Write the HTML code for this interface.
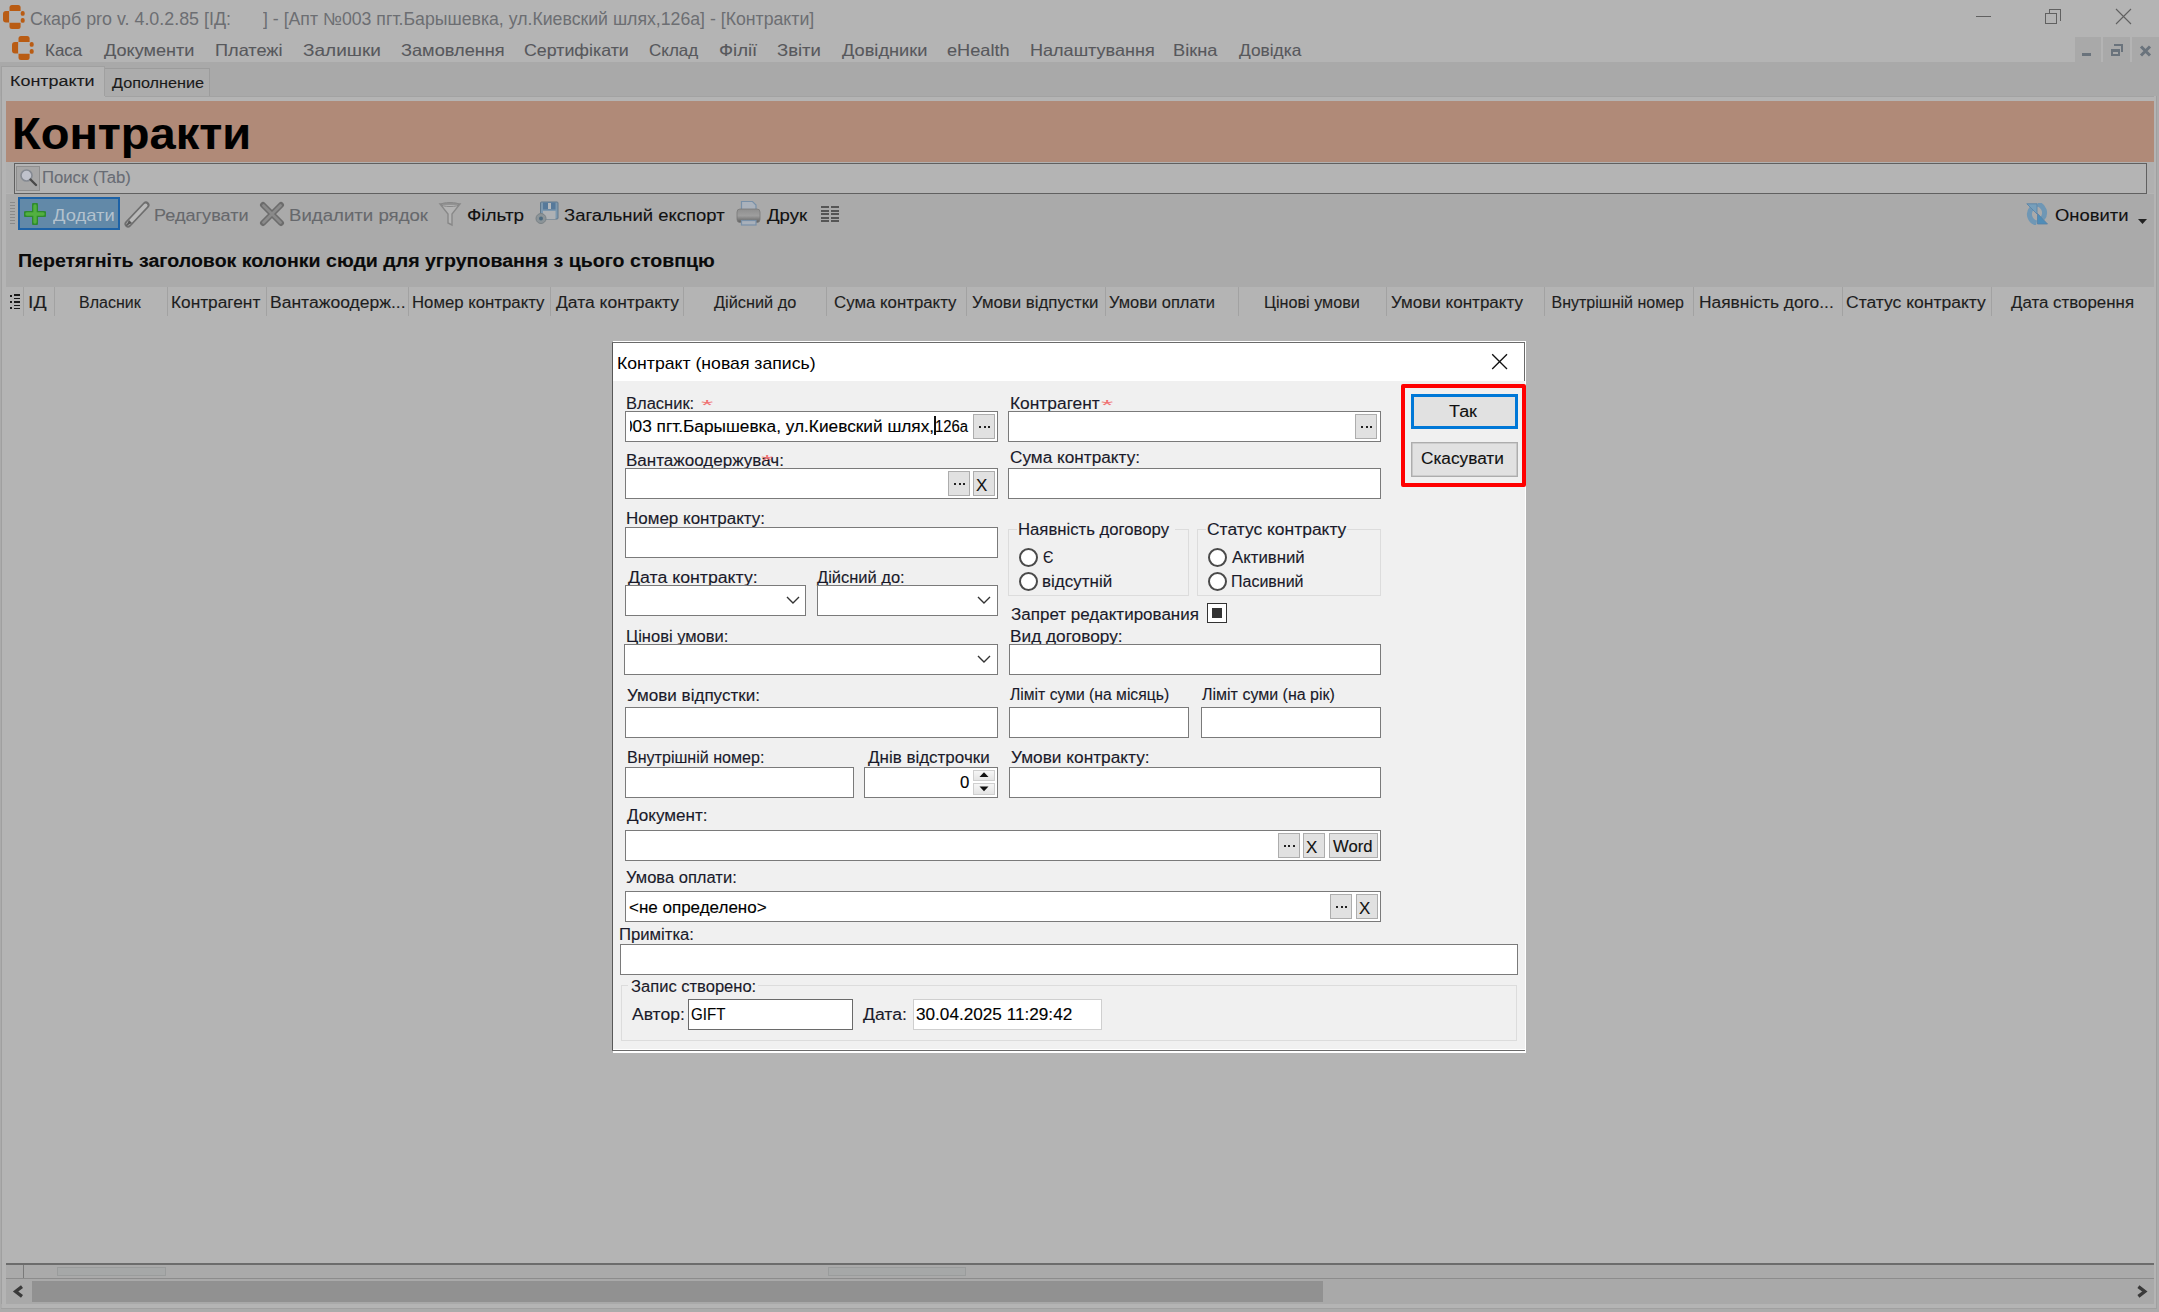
<!DOCTYPE html>
<html><head><meta charset="utf-8"><style>
html,body{margin:0;padding:0;}
body{width:2159px;height:1312px;position:relative;overflow:hidden;background:#b4b4b4;font-family:'Liberation Sans',sans-serif;}
div,span,svg{position:absolute;box-sizing:border-box;}
.t{white-space:pre;transform-origin:0 0;-webkit-text-stroke:0.12px currentColor;}
</style></head><body>
<div style="left:0px;top:0px;width:2159px;height:62px;background:#b4b4b4;"></div>
<svg style="left:3.2px;top:5px" width="23" height="25" viewBox="0 0 23 25"><g fill="#b95c14">
<path d="M6.5 6V2.5Q6.5 0 9 0H15.1Q17.6 0 17.6 2.5V6Z"/><path d="M6.1 6H3Q0 6 0 9V14.6Q0 17.6 3 17.6H6.1Z"/>
<path d="M6.5 17.8H17.6V21.5Q17.6 24 15.1 24H9Q6.5 24 6.5 21.5Z"/><rect x="17.7" y="6" width="4" height="4.8" rx="1.9"/>
<rect x="17.7" y="13" width="4" height="4.8" rx="1.9"/></g></svg>
<span class="t" style="left:29.98px;transform:scaleX(1.0206);top:11px;color:#6c6e72;font-size:17.5px;line-height:17.5px;-webkit-text-stroke:0;">Скарб pro v. 4.0.2.85 [ІД:</span>
<span class="t" style="left:263.00px;transform:scaleX(1.0110);top:11px;color:#6c6e72;font-size:17.5px;line-height:17.5px;-webkit-text-stroke:0;">] - [Апт №003 пгт.Барышевка, ул.Киевский шлях,126а] - [Контракти]</span>
<div style="left:1976px;top:16px;width:15px;height:1px;background:#606060;"></div>
<div style="left:2045px;top:13px;width:12px;height:11px;border:1px solid #606060;"></div>
<div style="left:2048.5px;top:9px;width:12px;height:4px;border-top:1px solid #606060;border-left:1px solid #606060;border-right:1px solid #606060;"></div>
<div style="left:2057px;top:9px;width:3.5px;height:12px;border-top:1px solid #606060;border-right:1px solid #606060;"></div>
<svg style="left:2115px;top:8px" width="17" height="17"><path d="M1 1L16 16M16 1L1 16" stroke="#606060" stroke-width="1.1"/></svg>
<svg style="left:11.8px;top:36.4px" width="23" height="25" viewBox="0 0 23 25"><g fill="#b95c14">
<path d="M6.5 6V2.5Q6.5 0 9 0H15.1Q17.6 0 17.6 2.5V6Z"/><path d="M6.1 6H3Q0 6 0 9V14.6Q0 17.6 3 17.6H6.1Z"/>
<path d="M6.5 17.8H17.6V21.5Q17.6 24 15.1 24H9Q6.5 24 6.5 21.5Z"/><rect x="17.7" y="6" width="4" height="4.8" rx="1.9"/>
<rect x="17.7" y="13" width="4" height="4.8" rx="1.9"/></g></svg>
<span class="t" style="left:44.97px;transform:scaleX(1.0286);top:42px;color:#57585c;font-size:16.5px;line-height:16.5px;-webkit-text-stroke:0.1px currentColor;">Каса</span>
<span class="t" style="left:103.50px;transform:scaleX(1.0976);top:42px;color:#57585c;font-size:16.5px;line-height:16.5px;-webkit-text-stroke:0.1px currentColor;">Документи</span>
<span class="t" style="left:215.40px;transform:scaleX(1.1000);top:42px;color:#57585c;font-size:16.5px;line-height:16.5px;-webkit-text-stroke:0.1px currentColor;">Платежі</span>
<span class="t" style="left:303.35px;transform:scaleX(1.1515);top:42px;color:#57585c;font-size:16.5px;line-height:16.5px;-webkit-text-stroke:0.1px currentColor;">Залишки</span>
<span class="t" style="left:400.90px;transform:scaleX(1.1033);top:42px;color:#57585c;font-size:16.5px;line-height:16.5px;-webkit-text-stroke:0.1px currentColor;">Замовлення</span>
<span class="t" style="left:524.42px;transform:scaleX(1.0789);top:42px;color:#57585c;font-size:16.5px;line-height:16.5px;-webkit-text-stroke:0.1px currentColor;">Сертифікати</span>
<span class="t" style="left:648.97px;transform:scaleX(1.0319);top:42px;color:#57585c;font-size:16.5px;line-height:16.5px;-webkit-text-stroke:0.1px currentColor;">Склад</span>
<span class="t" style="left:719.38px;transform:scaleX(1.1212);top:42px;color:#57585c;font-size:16.5px;line-height:16.5px;-webkit-text-stroke:0.1px currentColor;">Філії</span>
<span class="t" style="left:777.38px;transform:scaleX(1.1216);top:42px;color:#57585c;font-size:16.5px;line-height:16.5px;-webkit-text-stroke:0.1px currentColor;">Звіти</span>
<span class="t" style="left:841.50px;transform:scaleX(1.1039);top:42px;color:#57585c;font-size:16.5px;line-height:16.5px;-webkit-text-stroke:0.1px currentColor;">Довідники</span>
<span class="t" style="left:947.40px;transform:scaleX(1.1000);top:42px;color:#57585c;font-size:16.5px;line-height:16.5px;-webkit-text-stroke:0.1px currentColor;">eHealth</span>
<span class="t" style="left:1029.91px;transform:scaleX(1.0938);top:42px;color:#57585c;font-size:16.5px;line-height:16.5px;-webkit-text-stroke:0.1px currentColor;">Налаштування</span>
<span class="t" style="left:1173.40px;transform:scaleX(1.1026);top:42px;color:#57585c;font-size:16.5px;line-height:16.5px;-webkit-text-stroke:0.1px currentColor;">Вікна</span>
<span class="t" style="left:1239.00px;transform:scaleX(1.0500);top:42px;color:#57585c;font-size:16.5px;line-height:16.5px;-webkit-text-stroke:0.1px currentColor;">Довідка</span>
<div style="left:2075px;top:37px;width:26px;height:26px;background:#a9a9a9;"></div>
<div style="left:2103px;top:37px;width:27px;height:26px;background:#a9a9a9;"></div>
<div style="left:2132px;top:37px;width:27px;height:26px;background:#a9a9a9;"></div>
<div style="left:2082px;top:53px;width:9px;height:3px;background:#6a737c;"></div>
<div style="left:2110.5px;top:49px;width:9px;height:7px;border:2px solid #6a737c;border-top-width:3px;"></div>
<div style="left:2113.5px;top:44px;width:9.5px;height:8px;border-top:2.5px solid #6a737c;border-right:2px solid #6a737c;"></div>
<svg style="left:2139px;top:45px" width="13" height="12"><path d="M2 1.5L11 10.5M11 1.5L2 10.5" stroke="#6a737c" stroke-width="3"/></svg>
<div style="left:0px;top:62px;width:2159px;height:39px;background:#a9a9a9;"></div>
<div style="left:1px;top:66px;width:104px;height:35px;background:#b4b4b4;border:1px solid #a0a0a0;border-bottom:none;"></div>
<div style="left:105px;top:68px;width:105px;height:29px;background:#acacac;border:1px solid #9c9c9c;border-left:none;border-bottom:none;"></div>
<span class="t" style="left:10.35px;transform:scaleX(1.1549);top:73px;color:#1a1a1a;font-size:15.5px;line-height:15.5px;">Контракти</span>
<span class="t" style="left:112.00px;transform:scaleX(1.0455);top:75px;color:#1a1a1a;font-size:15.5px;line-height:15.5px;">Дополнение</span>
<div style="left:0px;top:96px;width:2159px;height:1216px;background:#b4b4b4;border-left:1px solid #ababab;"></div>
<div style="left:1px;top:96px;width:1px;height:1213px;background:#a0a0a0;"></div>
<div style="left:105px;top:96px;width:2052px;height:1px;background:#a2a2a2;"></div>
<div style="left:6px;top:101px;width:2148px;height:61px;background:#b08a78;"></div>
<span class="t" style="left:12.36px;transform:scaleX(1.0809);top:113px;color:#000;font-size:43.5px;line-height:43.5px;font-weight:bold;">Контракти</span>
<div style="left:6px;top:162px;width:2148px;height:31px;background:#b0b0b0;"></div>
<div style="left:14px;top:163px;width:2133px;height:31px;background:#b4b4b4;border:1px solid #606060;"></div>
<div style="left:16px;top:166px;width:24px;height:25px;background:#a6a6a6;border:1px solid #8e8e8e;"></div>
<svg style="left:18px;top:168px" width="22" height="22"><circle cx="8.5" cy="7.5" r="5.5" fill="#bfc2cc" stroke="#858a92" stroke-width="1.6"/><path d="M12.5 11.5L18 17" stroke="#4a4a4a" stroke-width="2.4" stroke-linecap="round"/></svg>
<span class="t" style="left:42.16px;transform:scaleX(1.0417);top:170px;color:#686c74;font-size:16px;line-height:16px;-webkit-text-stroke:0.1px currentColor;">Поиск (Tab)</span>
<div style="left:6px;top:194px;width:2148px;height:93px;background:#aaaaaa;"></div>
<div style="left:10px;top:202px;width:5px;height:1px;background:#8a8a8a;"></div>
<div style="left:10px;top:205px;width:5px;height:1px;background:#8a8a8a;"></div>
<div style="left:10px;top:208px;width:5px;height:1px;background:#8a8a8a;"></div>
<div style="left:10px;top:211px;width:5px;height:1px;background:#8a8a8a;"></div>
<div style="left:10px;top:214px;width:5px;height:1px;background:#8a8a8a;"></div>
<div style="left:10px;top:217px;width:5px;height:1px;background:#8a8a8a;"></div>
<div style="left:10px;top:220px;width:5px;height:1px;background:#8a8a8a;"></div>
<div style="left:10px;top:223px;width:5px;height:1px;background:#8a8a8a;"></div>
<div style="left:18px;top:197px;width:102px;height:33px;background:#6289a8;border:2px solid #1d62a6;"></div>
<svg style="left:24px;top:203px" width="22" height="22"><path d="M11 2V20M2 11H20" stroke="#2e8a2e" stroke-width="6" stroke-linecap="round"/><path d="M11 3V19M3 11H19" stroke="#52b040" stroke-width="3.4" stroke-linecap="round"/></svg>
<span class="t" style="left:53.00px;transform:scaleX(1.0804);top:207px;color:#b4c2ce;font-size:17px;line-height:17px;-webkit-text-stroke:0;">Додати</span>
<svg style="left:123px;top:199px" width="28" height="30"><path d="M5 25L23 6" stroke="#6e6e6e" stroke-width="7" stroke-linecap="round"/><path d="M5.5 24.5L22.5 6.5" stroke="#b9b9b9" stroke-width="4" stroke-linecap="round"/><path d="M3 27L6 21L9 24Z" fill="#5a5a5a"/></svg>
<span class="t" style="left:154.44px;transform:scaleX(1.0632);top:207px;color:#66686c;font-size:17px;line-height:17px;-webkit-text-stroke:0.1px currentColor;">Редагувати</span>
<svg style="left:259px;top:201px" width="26" height="26"><path d="M4 4L22 22M22 4L4 22" stroke="#6c6c6c" stroke-width="6" stroke-linecap="round"/><path d="M4.5 4.5L21.5 21.5M21.5 4.5L4.5 21.5" stroke="#8a8a8a" stroke-width="2.8" stroke-linecap="round"/></svg>
<span class="t" style="left:288.90px;transform:scaleX(1.0952);top:207px;color:#66686c;font-size:17px;line-height:17px;-webkit-text-stroke:0.1px currentColor;">Видалити рядок</span>
<svg style="left:438px;top:201px" width="24" height="26"><path d="M2 3H22L14 13V24L10 22V13Z" fill="#b4b4b4" stroke="#888" stroke-width="1.4"/><ellipse cx="12" cy="3.5" rx="9" ry="2" fill="none" stroke="#888"/></svg>
<span class="t" style="left:467.39px;transform:scaleX(1.1100);top:207px;color:#111;font-size:17px;line-height:17px;">Фільтр</span>
<svg style="left:534px;top:199px" width="26" height="27"><rect x="6.5" y="3" width="17.5" height="17" rx="1" fill="#7d98ae" stroke="#60788c" stroke-width="1"/><rect x="9" y="3.5" width="12.5" height="7" fill="#56799a"/><rect x="14" y="4" width="3" height="6" fill="#b4b8bc"/><rect x="9" y="12" width="12.5" height="8" fill="#aeb1b4"/><circle cx="7" cy="19.5" r="5" fill="#8c9498" stroke="#7a8286" stroke-width="1"/><circle cx="7" cy="19.5" r="2" fill="#4d6b80"/></svg>
<span class="t" style="left:564.41px;transform:scaleX(1.0850);top:207px;color:#111;font-size:17px;line-height:17px;">Загальний експорт</span>
<svg style="left:736px;top:200px" width="25" height="26"><defs><linearGradient id="pg" x1="0" y1="0" x2="0" y2="1"><stop offset="0" stop-color="#8e8e8e"/><stop offset="0.5" stop-color="#9e9e9e"/><stop offset="1" stop-color="#5e5e5e"/></linearGradient></defs><path d="M5.5 1.5H16.5L20 5V10H5.5Z" fill="#aab2bc" stroke="#7890a8" stroke-width="1.2"/><rect x="1" y="9" width="23" height="13.5" rx="3" fill="url(#pg)" stroke="#7a7a7a" stroke-width="0.8"/><rect x="5.5" y="20.5" width="14.5" height="4.5" fill="#a8b0ba" stroke="#7890a8" stroke-width="1.2"/></svg>
<span class="t" style="left:766.50px;transform:scaleX(1.0946);top:207px;color:#111;font-size:17px;line-height:17px;">Друк</span>
<div style="left:820.5px;top:206px;width:8px;height:2px;background:#555;"></div>
<div style="left:830.5px;top:206px;width:8px;height:2px;background:#555;"></div>
<div style="left:820.5px;top:209.5px;width:8px;height:2px;background:#555;"></div>
<div style="left:830.5px;top:209.5px;width:8px;height:2px;background:#555;"></div>
<div style="left:820.5px;top:213px;width:8px;height:2px;background:#555;"></div>
<div style="left:830.5px;top:213px;width:8px;height:2px;background:#555;"></div>
<div style="left:820.5px;top:216.5px;width:8px;height:2px;background:#555;"></div>
<div style="left:830.5px;top:216.5px;width:8px;height:2px;background:#555;"></div>
<div style="left:820.5px;top:220px;width:8px;height:2px;background:#555;"></div>
<div style="left:830.5px;top:220px;width:8px;height:2px;background:#555;"></div>
<svg style="left:2026px;top:203px" width="23" height="22"><g stroke="#5680a6" stroke-width="0.8"><path d="M10.5 20A9 9 0 0 1 5.5 5.5" fill="none" stroke="#6f97b5" stroke-width="5"/><path d="M11.5 1A9 9 0 0 1 16.5 15.5" fill="none" stroke="#6f97b5" stroke-width="5"/><path d="M0.8 0.8H11V11Z" fill="#779fbb"/><path d="M11.5 10.5V21H21.5Z" fill="#4f8db8"/></g></svg>
<span class="t" style="left:2054.92px;transform:scaleX(1.0833);top:207px;color:#111;font-size:17px;line-height:17px;">Оновити</span>
<svg style="left:2138px;top:219px" width="9" height="6"><path d="M0 0H9L4.5 5Z" fill="#222"/></svg>
<span class="t" style="left:17.88px;transform:scaleX(1.1184);top:253px;color:#0a0a0a;font-size:17.5px;line-height:17.5px;font-weight:bold;">Перетягніть заголовок колонки сюди для угруповання з цього стовпцю</span>
<div style="left:6px;top:287px;width:2148px;height:33px;background:#b4b4b4;"></div>
<div style="left:14px;top:294px;width:6px;height:1.6px;background:#1a1a1a;"></div>
<div style="left:14px;top:297.5px;width:6px;height:1.6px;background:#1a1a1a;"></div>
<div style="left:14px;top:301px;width:6px;height:1.6px;background:#1a1a1a;"></div>
<div style="left:14px;top:304.5px;width:6px;height:1.6px;background:#1a1a1a;"></div>
<div style="left:14px;top:307.5px;width:6px;height:1.6px;background:#1a1a1a;"></div>
<div style="left:10px;top:294.5px;width:2px;height:2px;background:#1a1a1a;"></div>
<div style="left:10px;top:300.5px;width:2px;height:2px;background:#1a1a1a;"></div>
<div style="left:10px;top:306.5px;width:2px;height:2px;background:#1a1a1a;"></div>
<div style="left:23px;top:287px;width:1px;height:29px;background:#a2a2a2;"></div>
<div style="left:54px;top:287px;width:1px;height:29px;background:#a2a2a2;"></div>
<div style="left:167px;top:287px;width:1px;height:29px;background:#a2a2a2;"></div>
<div style="left:266px;top:287px;width:1px;height:29px;background:#a2a2a2;"></div>
<div style="left:408px;top:287px;width:1px;height:29px;background:#a2a2a2;"></div>
<div style="left:550px;top:287px;width:1px;height:29px;background:#a2a2a2;"></div>
<div style="left:683px;top:287px;width:1px;height:29px;background:#a2a2a2;"></div>
<div style="left:826px;top:287px;width:1px;height:29px;background:#a2a2a2;"></div>
<div style="left:966px;top:287px;width:1px;height:29px;background:#a2a2a2;"></div>
<div style="left:1105px;top:287px;width:1px;height:29px;background:#a2a2a2;"></div>
<div style="left:1238px;top:287px;width:1px;height:29px;background:#a2a2a2;"></div>
<div style="left:1386px;top:287px;width:1px;height:29px;background:#a2a2a2;"></div>
<div style="left:1544px;top:287px;width:1px;height:29px;background:#a2a2a2;"></div>
<div style="left:1693px;top:287px;width:1px;height:29px;background:#a2a2a2;"></div>
<div style="left:1842px;top:287px;width:1px;height:29px;background:#a2a2a2;"></div>
<div style="left:1991px;top:287px;width:1px;height:29px;background:#a2a2a2;"></div>
<span class="t" style="left:27.79px;transform:scaleX(1.2143);top:295px;color:#1e1e1e;font-size:16px;line-height:16px;">ІД</span>
<span class="t" style="left:79.00px;transform:scaleX(1.0000);top:295px;color:#1e1e1e;font-size:16px;line-height:16px;">Власник</span>
<span class="t" style="left:170.92px;transform:scaleX(1.0793);top:295px;color:#1e1e1e;font-size:16px;line-height:16px;">Контрагент</span>
<span class="t" style="left:269.90px;transform:scaleX(1.0950);top:295px;color:#1e1e1e;font-size:16px;line-height:16px;">Вантажоодерж...</span>
<span class="t" style="left:411.95px;transform:scaleX(1.0476);top:295px;color:#1e1e1e;font-size:16px;line-height:16px;">Номер контракту</span>
<span class="t" style="left:555.50px;transform:scaleX(1.0929);top:295px;color:#1e1e1e;font-size:16px;line-height:16px;">Дата контракту</span>
<span class="t" style="left:714.00px;transform:scaleX(1.0188);top:295px;color:#1e1e1e;font-size:16px;line-height:16px;">Дійсний до</span>
<span class="t" style="left:833.95px;transform:scaleX(1.0517);top:295px;color:#1e1e1e;font-size:16px;line-height:16px;">Сума контракту</span>
<span class="t" style="left:971.95px;transform:scaleX(1.0504);top:295px;color:#1e1e1e;font-size:16px;line-height:16px;">Умови відпустки</span>
<span class="t" style="left:1108.97px;transform:scaleX(1.0297);top:295px;color:#1e1e1e;font-size:16px;line-height:16px;">Умови оплати</span>
<span class="t" style="left:1263.99px;transform:scaleX(1.0108);top:295px;color:#1e1e1e;font-size:16px;line-height:16px;">Цінові умови</span>
<span class="t" style="left:1390.93px;transform:scaleX(1.0650);top:295px;color:#1e1e1e;font-size:16px;line-height:16px;">Умови контракту</span>
<span class="t" style="left:1551.50px;transform:scaleX(1.0000);top:295px;color:#1e1e1e;font-size:16px;line-height:16px;">Внутрішній номер</span>
<span class="t" style="left:1698.91px;transform:scaleX(1.0861);top:295px;color:#1e1e1e;font-size:16px;line-height:16px;">Наявність дого...</span>
<span class="t" style="left:1846.41px;transform:scaleX(1.0945);top:295px;color:#1e1e1e;font-size:16px;line-height:16px;">Статус контракту</span>
<span class="t" style="left:2011.00px;transform:scaleX(1.0560);top:295px;color:#1e1e1e;font-size:16px;line-height:16px;">Дата створення</span>
<div style="left:6px;top:320px;width:2148px;height:943px;background:#b4b4b4;"></div>
<div style="left:6px;top:1262.5px;width:2148px;height:2.5px;background:#6c6c6c;"></div>
<div style="left:6px;top:1265px;width:2148px;height:13px;background:#aaaaaa;"></div>
<div style="left:23px;top:1265px;width:1px;height:13px;background:#7a7a7a;"></div>
<div style="left:57px;top:1267px;width:109px;height:9px;background:#a6a8a8;border:1px solid #9a9c9c;"></div>
<div style="left:828px;top:1267px;width:138px;height:9px;background:#a6a8a8;border:1px solid #9a9c9c;"></div>
<div style="left:6px;top:1278px;width:2148px;height:1px;background:#8c8c8c;"></div>
<div style="left:6px;top:1279px;width:2148px;height:25px;background:#a9a9a9;"></div>
<div style="left:32px;top:1281px;width:1291px;height:21px;background:#919191;"></div>
<svg style="left:12px;top:1285px" width="13" height="13"><path d="M10 1.6L3.6 6.5L10 11.4" fill="none" stroke="#3a3a3a" stroke-width="3.3"/></svg>
<svg style="left:2136px;top:1285px" width="13" height="13"><path d="M2.4 1.6L8.8 6.5L2.4 11.4" fill="none" stroke="#3a3a3a" stroke-width="3.3"/></svg>
<div style="left:0px;top:1304px;width:2159px;height:8px;background:#ababab;"></div>
<div style="left:2px;top:1304px;width:2154px;height:4px;background:#b4b4b4;"></div>
<div style="left:1px;top:1308px;width:2156px;height:1px;background:#a0a0a0;"></div>
<div style="left:2154px;top:96px;width:2px;height:1212px;background:#b4b4b4;"></div>
<div style="left:2156px;top:96px;width:1px;height:1213px;background:#a0a0a0;"></div>
<div style="left:2157px;top:96px;width:2px;height:1216px;background:#ababab;"></div>
<div style="left:613px;top:341px;width:913px;height:712px;background:#fff;"></div>
<div style="left:612px;top:342px;width:1px;height:709px;background:#585858;"></div>
<div style="left:612px;top:342px;width:913px;height:1px;background:#6a6a6a;"></div>
<div style="left:1524px;top:342px;width:1px;height:39px;background:#6a6a6a;"></div>
<div style="left:612px;top:1050px;width:913px;height:1px;background:#6a6a6a;"></div>
<div style="left:613px;top:381px;width:912px;height:668px;background:#f0f0f0;"></div>
<span class="t" style="left:617.46px;transform:scaleX(1.0381);top:355px;color:#000;font-size:17px;line-height:17px;-webkit-text-stroke:0;">Контракт (новая запись)</span>
<svg style="left:1490px;top:352px" width="19" height="19"><path d="M2.2 2.2L17 17M17 2.2L2.2 17" stroke="#111" stroke-width="1.35"/></svg>
<span class="t" style="left:626.47px;transform:scaleX(1.0312);top:396px;color:#1a1a2a;font-size:16px;line-height:16px;">Власник:</span>
<span class="t" style="left:700.75px;transform:scaleX(2.2500);top:398px;color:#f07070;font-size:14px;line-height:14px;-webkit-text-stroke:0;">*</span>
<div style="left:625px;top:411px;width:373px;height:31px;background:#fff;border:1px solid #7a7a7a;"></div>
<span class="t" style="left:622.92px;transform:scaleX(1.0790);top:419px;color:#000;font-size:16px;line-height:16px;">003 пгт.Барышевка, ул.Киевский шлях,</span>
<span class="t" style="left:934.97px;transform:scaleX(0.9286);top:419px;color:#000;font-size:16px;line-height:16px;">126а</span>
<div style="left:614px;top:412px;width:11px;height:29px;background:#f0f0f0;"></div>
<div style="left:625px;top:411px;width:1px;height:31px;background:#7a7a7a;"></div>
<div style="left:626px;top:412px;width:3.5px;height:29px;background:#fff;"></div>
<div style="left:934px;top:415.5px;width:1.5px;height:19.5px;background:#111;"></div>
<div style="left:973px;top:414px;width:22px;height:25px;background:#e1e1e1;border:1px solid #adadad;"></div>
<div style="left:979.0px;top:426px;width:2px;height:2px;background:#222;"></div>
<div style="left:983.6px;top:426px;width:2px;height:2px;background:#222;"></div>
<div style="left:988.2px;top:426px;width:2px;height:2px;background:#222;"></div>
<span class="t" style="left:626.43px;transform:scaleX(1.0651);top:453px;color:#1a1a2a;font-size:16px;line-height:16px;">Вантажоодержувач:</span>
<span class="t" style="left:760.75px;transform:scaleX(2.2500);top:453px;color:#f07070;font-size:14px;line-height:14px;-webkit-text-stroke:0;">*</span>
<div style="left:625px;top:468px;width:373px;height:31px;background:#fff;border:1px solid #7a7a7a;"></div>
<div style="left:948px;top:471px;width:22px;height:25px;background:#e1e1e1;border:1px solid #adadad;"></div>
<div style="left:954.0px;top:483px;width:2px;height:2px;background:#222;"></div>
<div style="left:958.6px;top:483px;width:2px;height:2px;background:#222;"></div>
<div style="left:963.2px;top:483px;width:2px;height:2px;background:#222;"></div>
<div style="left:973px;top:471px;width:22px;height:25px;background:#e1e1e1;border:1px solid #adadad;"></div>
<span class="t" style="left:976.44px;transform:scaleX(1.0556);top:478px;color:#111;font-size:16px;line-height:16px;">X</span>
<span class="t" style="left:626.44px;transform:scaleX(1.0620);top:511px;color:#1a1a2a;font-size:16px;line-height:16px;">Номер контракту:</span>
<div style="left:625px;top:527px;width:373px;height:31px;background:#fff;border:1px solid #7a7a7a;"></div>
<span class="t" style="left:628.00px;transform:scaleX(1.1078);top:570px;color:#1a1a2a;font-size:16px;line-height:16px;">Дата контракту:</span>
<span class="t" style="left:817.00px;transform:scaleX(1.0298);top:570px;color:#1a1a2a;font-size:16px;line-height:16px;">Дійсний до:</span>
<div style="left:625px;top:585px;width:181px;height:31px;background:#fff;border:1px solid #7a7a7a;"></div>
<svg style="left:786px;top:596px" width="14" height="8"><path d="M1 1L7 7L13 1" fill="none" stroke="#333" stroke-width="1.4"/></svg>
<div style="left:817px;top:585px;width:181px;height:31px;background:#fff;border:1px solid #7a7a7a;"></div>
<svg style="left:977px;top:596px" width="14" height="8"><path d="M1 1L7 7L13 1" fill="none" stroke="#333" stroke-width="1.4"/></svg>
<span class="t" style="left:625.97px;transform:scaleX(1.0309);top:629px;color:#1a1a2a;font-size:16px;line-height:16px;">Цінові умови:</span>
<div style="left:624px;top:644px;width:374px;height:31px;background:#fff;border:1px solid #7a7a7a;"></div>
<svg style="left:977px;top:655px" width="14" height="8"><path d="M1 1L7 7L13 1" fill="none" stroke="#333" stroke-width="1.4"/></svg>
<span class="t" style="left:626.93px;transform:scaleX(1.0656);top:688px;color:#1a1a2a;font-size:16px;line-height:16px;">Умови відпустки:</span>
<div style="left:625px;top:707px;width:373px;height:31px;background:#fff;border:1px solid #7a7a7a;"></div>
<span class="t" style="left:626.50px;transform:scaleX(1.0037);top:750px;color:#1a1a2a;font-size:16px;line-height:16px;">Внутрішній номер:</span>
<span class="t" style="left:867.50px;transform:scaleX(1.0614);top:750px;color:#1a1a2a;font-size:16px;line-height:16px;">Днів відстрочки</span>
<div style="left:625px;top:767px;width:229px;height:31px;background:#fff;border:1px solid #7a7a7a;"></div>
<div style="left:864px;top:767px;width:134px;height:31px;background:#fff;border:1px solid #7a7a7a;"></div>
<span class="t" style="left:959.55px;transform:scaleX(1.0500);top:775px;color:#000;font-size:16px;line-height:16px;">0</span>
<div style="left:973px;top:770px;width:22px;height:11px;background:linear-gradient(#f6f6f6,#e4e4e4);border:1px solid #cfcfcf;"></div>
<div style="left:973px;top:783px;width:22px;height:12px;background:linear-gradient(#f6f6f6,#e4e4e4);border:1px solid #cfcfcf;"></div>
<svg style="left:979px;top:772px" width="10" height="6"><path d="M0.5 5H9.5L5 0.3Z" fill="#111"/></svg>
<svg style="left:979px;top:785.5px" width="10" height="6"><path d="M0.5 0.5H9.5L5 5.2Z" fill="#111"/></svg>
<span class="t" style="left:627.00px;transform:scaleX(1.0676);top:808px;color:#1a1a2a;font-size:16px;line-height:16px;">Документ:</span>
<div style="left:625px;top:830px;width:756px;height:31px;background:#fff;border:1px solid #7a7a7a;"></div>
<div style="left:1278px;top:833px;width:22px;height:25px;background:#e1e1e1;border:1px solid #adadad;"></div>
<div style="left:1283.5px;top:845px;width:2px;height:2px;background:#222;"></div>
<div style="left:1288.1px;top:845px;width:2px;height:2px;background:#222;"></div>
<div style="left:1292.7px;top:845px;width:2px;height:2px;background:#222;"></div>
<div style="left:1303px;top:833px;width:22px;height:25px;background:#e1e1e1;border:1px solid #adadad;"></div>
<span class="t" style="left:1306.44px;transform:scaleX(1.0556);top:840px;color:#111;font-size:16px;line-height:16px;">X</span>
<div style="left:1328.5px;top:833px;width:49.5px;height:25px;background:#e1e1e1;border:1px solid #adadad;"></div>
<span class="t" style="left:1332.50px;transform:scaleX(1.0405);top:839px;color:#111;font-size:16px;line-height:16px;">Word</span>
<span class="t" style="left:625.97px;transform:scaleX(1.0333);top:870px;color:#1a1a2a;font-size:16px;line-height:16px;">Умова оплати:</span>
<div style="left:625px;top:891px;width:756px;height:31px;background:#fff;border:1px solid #7a7a7a;"></div>
<span class="t" style="left:628.94px;transform:scaleX(1.0625);top:900px;color:#000;font-size:16px;line-height:16px;">&lt;не определено&gt;</span>
<div style="left:1330px;top:894px;width:22px;height:25px;background:#e1e1e1;border:1px solid #adadad;"></div>
<div style="left:1336.0px;top:906px;width:2px;height:2px;background:#222;"></div>
<div style="left:1340.6px;top:906px;width:2px;height:2px;background:#222;"></div>
<div style="left:1345.2px;top:906px;width:2px;height:2px;background:#222;"></div>
<div style="left:1355.5px;top:894px;width:22px;height:25px;background:#e1e1e1;border:1px solid #adadad;"></div>
<span class="t" style="left:1358.94px;transform:scaleX(1.0556);top:901px;color:#111;font-size:16px;line-height:16px;">X</span>
<span class="t" style="left:618.96px;transform:scaleX(1.0429);top:927px;color:#1a1a2a;font-size:16px;line-height:16px;">Примітка:</span>
<div style="left:620px;top:944px;width:898px;height:31px;background:#fff;border:1px solid #7a7a7a;"></div>
<div style="left:621px;top:985px;width:896px;height:56px;border:1px solid #dcdcdc;"></div>
<div style="left:628px;top:978px;width:130px;height:14px;background:#f0f0f0;"></div>
<span class="t" style="left:631.47px;transform:scaleX(1.0336);top:979px;color:#1a1a2a;font-size:16px;line-height:16px;">Запис створено:</span>
<span class="t" style="left:632.00px;transform:scaleX(1.0957);top:1007px;color:#1a1a2a;font-size:16px;line-height:16px;">Автор:</span>
<div style="left:688px;top:999px;width:165px;height:31px;background:#fff;border:1px solid #6a6a6a;"></div>
<span class="t" style="left:691.26px;transform:scaleX(0.9429);top:1007px;color:#000;font-size:16px;line-height:16px;">GIFT</span>
<span class="t" style="left:863.00px;transform:scaleX(1.1026);top:1007px;color:#1a1a2a;font-size:16px;line-height:16px;">Дата:</span>
<div style="left:913px;top:999px;width:189px;height:31px;background:#fff;border:1px solid #cfcfcf;"></div>
<span class="t" style="left:916.43px;transform:scaleX(1.0729);top:1007px;color:#000;font-size:16px;line-height:16px;">30.04.2025 11:29:42</span>
<span class="t" style="left:1009.91px;transform:scaleX(1.0854);top:396px;color:#1a1a2a;font-size:16px;line-height:16px;">Контрагент</span>
<span class="t" style="left:1100.75px;transform:scaleX(2.2500);top:398px;color:#f07070;font-size:14px;line-height:14px;-webkit-text-stroke:0;">*</span>
<div style="left:1008px;top:411px;width:373px;height:31px;background:#fff;border:1px solid #7a7a7a;"></div>
<div style="left:1355px;top:414px;width:22px;height:25px;background:#e1e1e1;border:1px solid #adadad;"></div>
<div style="left:1361.0px;top:426px;width:2px;height:2px;background:#222;"></div>
<div style="left:1365.6px;top:426px;width:2px;height:2px;background:#222;"></div>
<div style="left:1370.2px;top:426px;width:2px;height:2px;background:#222;"></div>
<span class="t" style="left:1010.42px;transform:scaleX(1.0756);top:450px;color:#1a1a2a;font-size:16px;line-height:16px;">Сума контракту:</span>
<div style="left:1008px;top:468px;width:373px;height:31px;background:#fff;border:1px solid #7a7a7a;"></div>
<div style="left:1008px;top:529px;width:181px;height:67px;border:1px solid #dcdcdc;"></div>
<div style="left:1017px;top:522px;width:158px;height:14px;background:#f0f0f0;"></div>
<span class="t" style="left:1017.96px;transform:scaleX(1.0438);top:522px;color:#1a1a2a;font-size:16px;line-height:16px;">Наявність договору</span>
<div style="left:1197px;top:529px;width:184px;height:67px;border:1px solid #dcdcdc;"></div>
<div style="left:1206px;top:522px;width:141px;height:14px;background:#f0f0f0;"></div>
<span class="t" style="left:1206.91px;transform:scaleX(1.0906);top:522px;color:#1a1a2a;font-size:16px;line-height:16px;">Статус контракту</span>
<div style="left:1019px;top:548px;width:19px;height:19px;border-radius:50%;background:#fff;border:2px solid #4a4a4a;"></div>
<span class="t" style="left:1042.60px;transform:scaleX(0.9000);top:550px;color:#1a1a2a;font-size:16px;line-height:16px;">Є</span>
<div style="left:1019px;top:572px;width:19px;height:19px;border-radius:50%;background:#fff;border:2px solid #4a4a4a;"></div>
<span class="t" style="left:1041.94px;transform:scaleX(1.0625);top:574px;color:#1a1a2a;font-size:16px;line-height:16px;">відсутній</span>
<div style="left:1208px;top:548px;width:19px;height:19px;border-radius:50%;background:#fff;border:2px solid #4a4a4a;"></div>
<span class="t" style="left:1232.00px;transform:scaleX(1.0493);top:550px;color:#1a1a2a;font-size:16px;line-height:16px;">Активний</span>
<div style="left:1208px;top:572px;width:19px;height:19px;border-radius:50%;background:#fff;border:2px solid #4a4a4a;"></div>
<span class="t" style="left:1231.00px;transform:scaleX(1.0000);top:574px;color:#1a1a2a;font-size:16px;line-height:16px;">Пасивний</span>
<span class="t" style="left:1011.44px;transform:scaleX(1.0629);top:607px;color:#1a1a2a;font-size:16px;line-height:16px;">Запрет редактирования</span>
<div style="left:1207px;top:603px;width:20px;height:20px;background:#fff;border:1.5px solid #333;"></div>
<div style="left:1212px;top:608px;width:10px;height:10px;background:#333;"></div>
<span class="t" style="left:1009.92px;transform:scaleX(1.0784);top:629px;color:#1a1a2a;font-size:16px;line-height:16px;">Вид договору:</span>
<div style="left:1009px;top:644px;width:372px;height:31px;background:#fff;border:1px solid #7a7a7a;"></div>
<span class="t" style="left:1010.00px;transform:scaleX(0.9814);top:687px;color:#1a1a2a;font-size:16px;line-height:16px;">Ліміт суми (на місяць)</span>
<span class="t" style="left:1202.00px;transform:scaleX(1.0000);top:687px;color:#1a1a2a;font-size:16px;line-height:16px;">Ліміт суми (на рік)</span>
<div style="left:1009px;top:707px;width:180px;height:31px;background:#fff;border:1px solid #7a7a7a;"></div>
<div style="left:1201px;top:707px;width:180px;height:31px;background:#fff;border:1px solid #7a7a7a;"></div>
<span class="t" style="left:1010.92px;transform:scaleX(1.0794);top:750px;color:#1a1a2a;font-size:16px;line-height:16px;">Умови контракту:</span>
<div style="left:1009px;top:767px;width:372px;height:31px;background:#fff;border:1px solid #7a7a7a;"></div>
<div style="left:1401px;top:384px;width:125px;height:103px;border:4px solid #ff0000;border-bottom-width:4.5px;border-radius:2px;"></div>
<div style="left:1411px;top:394px;width:106.5px;height:35px;background:#e1e1e1;border:3px solid #0078d7;"></div>
<span class="t" style="left:1448.50px;transform:scaleX(1.1200);top:404px;color:#111;font-size:16px;line-height:16px;">Так</span>
<div style="left:1411px;top:442px;width:106.5px;height:35px;background:#e1e1e1;border:1px solid #adadad;box-shadow:inset 0 0 0 0.6px #b8b8b8;"></div>
<span class="t" style="left:1421.12px;transform:scaleX(1.0773);top:451px;color:#111;font-size:16px;line-height:16px;">Скасувати</span>
</body></html>
